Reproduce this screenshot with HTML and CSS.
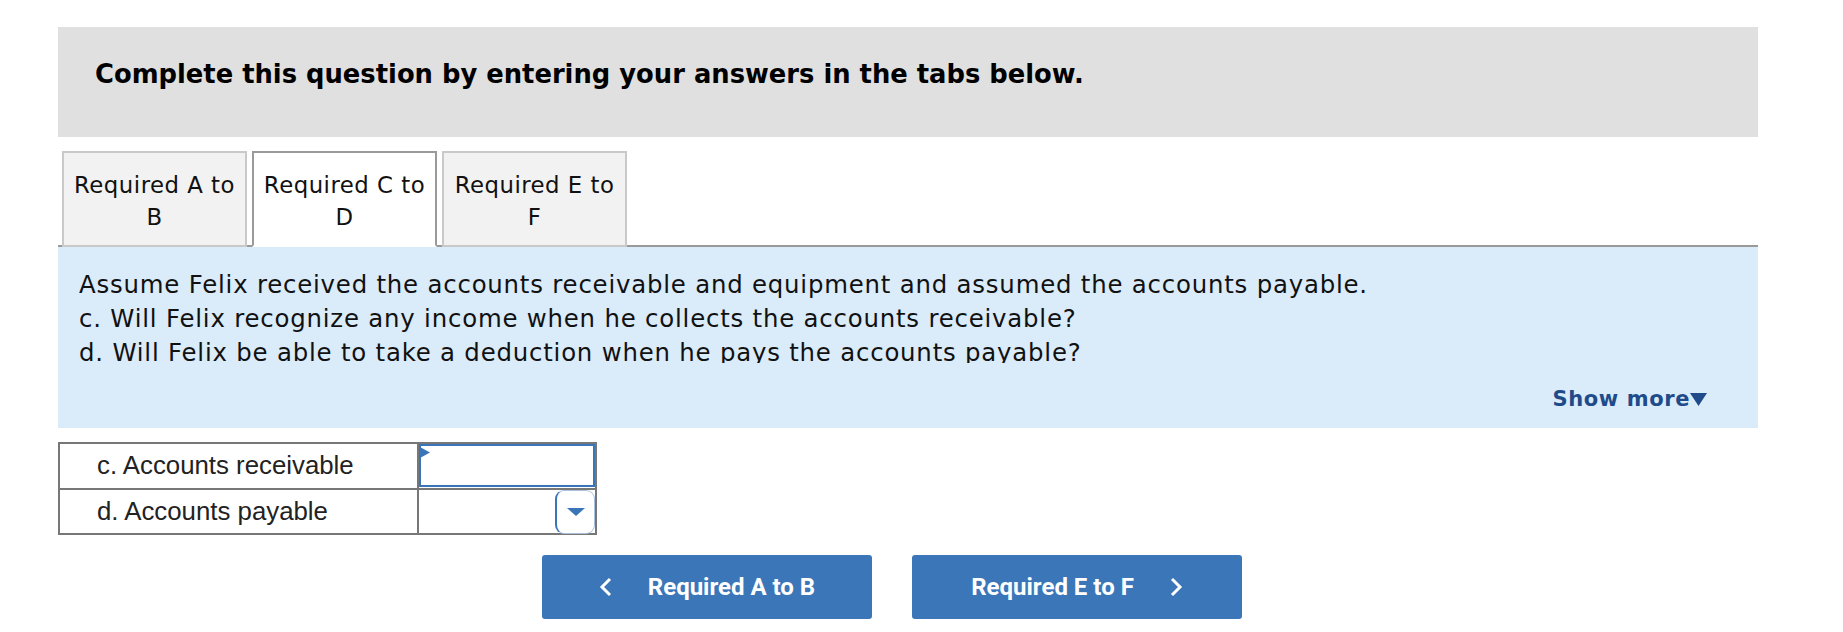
FILE: index.html
```html
<!DOCTYPE html>
<html>
<head>
<meta charset="utf-8">
<link rel="stylesheet" href="styles.css">
</head>
<body>
<div class="wrap">
  <div class="banner">Complete this question by entering your answers in the tabs below.</div>

  <div class="tabs">
    <div class="tab">Required A to<br>B</div>
    <div class="tab active">Required C to<br>D</div>
    <div class="tab">Required E to<br>F</div>
  </div>

  <div class="panel">
    <div class="qtext">
      <div>Assume Felix received the accounts receivable and equipment and assumed the accounts payable.</div>
      <div>c. Will Felix recognize any income when he collects the accounts receivable?</div>
      <div>d. Will Felix be able to take a deduction when he pays the accounts payable?</div>
    </div>
    <div class="more">Show more<svg class="more-tri" width="17" height="13" viewBox="0 0 17 13"><polygon points="0,0 17,0 8.5,13" fill="#1f4b8a"/></svg></div>
  </div>

  <table class="answers">
    <tr>
      <td class="label">c. Accounts receivable</td>
      <td class="field">
        <div class="input">
          <svg class="flag" width="10" height="11" viewBox="0 0 10 11"><polygon points="0,0 10,5.5 0,11" fill="#3a75b9"/></svg>
        </div>
      </td>
    </tr>
    <tr>
      <td class="label">d. Accounts payable</td>
      <td class="field">
        <div class="select">
          <span class="dd"><svg width="18" height="8" viewBox="0 0 18 8"><polygon points="0,0 18,0 9,8" fill="#3a75b9"/></svg></span>
        </div>
      </td>
    </tr>
  </table>

  <div class="nav">
    <button class="btn"><svg class="chev" width="14" height="20" viewBox="0 0 14 20"><polyline points="11,2 3,10 11,18" fill="none" stroke="#fff" stroke-width="3"/></svg><span>Required A to B</span></button>
    <button class="btn"><span>Required E to F</span><svg class="chev" width="14" height="20" viewBox="0 0 14 20"><polyline points="3,2 11,10 3,18" fill="none" stroke="#fff" stroke-width="3"/></svg></button>
  </div>
</div>
</body>
</html>
```
FILE: styles.css
```css
html, body {
  margin: 0;
  padding: 0;
  background: #ffffff;
}
.wrap {
  margin: 27px 0 0 58px;
  width: 1700px;
  font-family: "DejaVu Sans", Verdana, sans-serif;
  color: #000;
}
.banner {
  background: #e0e0e0;
  height: 110px;
  box-sizing: border-box;
  padding: 31px 37px 0;
  font-weight: bold;
  font-size: 25.8px;
  line-height: 32px;
}
.tabs {
  display: flex;
  gap: 5px;
  margin-top: 14px;
  padding-left: 4px;
  border-bottom: 2px solid #9a9a9a;
}
.tab {
  width: 185px;
  box-sizing: border-box;
  height: 96px;
  margin-bottom: -2px;
  padding-top: 16px;
  background: #f2f2f2;
  border: 2px solid #c9c9c9;
  text-align: center;
  font-size: 22.8px;
  letter-spacing: 0.5px;
  line-height: 32px;
  color: #111;
}
.tab.active {
  background: #fff;
  border-color: #9a9a9a;
  border-bottom-color: #fff;
}
.panel {
  background: #daebf9;
  height: 181px;
  box-sizing: border-box;
  padding: 21px 51px 0 21px;
}
.qtext {
  font-size: 24.4px;
  letter-spacing: 0.8px;
  line-height: 34px;
  height: 95px;
  overflow: hidden;
  color: #111;
}
.more {
  margin-top: 24px;
  text-align: right;
  font-weight: bold;
  font-size: 21px;
  letter-spacing: 0.6px;
  line-height: 24px;
  color: #1f4b8a;
}
.more-tri {
  margin-left: 0;
  vertical-align: 0px;
}
.answers {
  margin-top: 14px;
  border-collapse: collapse;
  font-family: "Liberation Sans", Arial, sans-serif;
}
.answers td {
  border: 2px solid #777;
  padding: 0;
  height: 43.5px;
}
.label {
  width: 320px;
  padding-left: 37px !important;
  font-size: 25.8px;
  color: #222;
}
.field {
  width: 176px;
  position: relative;
}
.input {
  position: relative;
  height: 43px;
  box-sizing: border-box;
  border: 2px solid #3a75b9;
}
.flag {
  position: absolute;
  left: -1px;
  top: 1px;
}
.select {
  height: 43px;
  display: flex;
  justify-content: flex-end;
}
.dd {
  width: 40px;
  height: 44px;
  box-sizing: border-box;
  border: 1px solid #a9c3df;
  border-left: 2px solid #3a75b9;
  border-radius: 9px;
  display: flex;
  align-items: center;
  justify-content: center;
}
.nav {
  display: flex;
  gap: 40px;
  margin: 20px 0 0 484px;
}
.btn {
  width: 330px;
  height: 64px;
  background: #3b76b9;
  border: none;
  border-radius: 3px;
  color: #fff;
  font-family: Roboto, "Liberation Sans", sans-serif;
  font-weight: bold;
  font-size: 24px;
  display: flex;
  align-items: center;
  justify-content: center;
  gap: 35px;
  padding: 0;
}
.chev {
  display: block;
}
```
